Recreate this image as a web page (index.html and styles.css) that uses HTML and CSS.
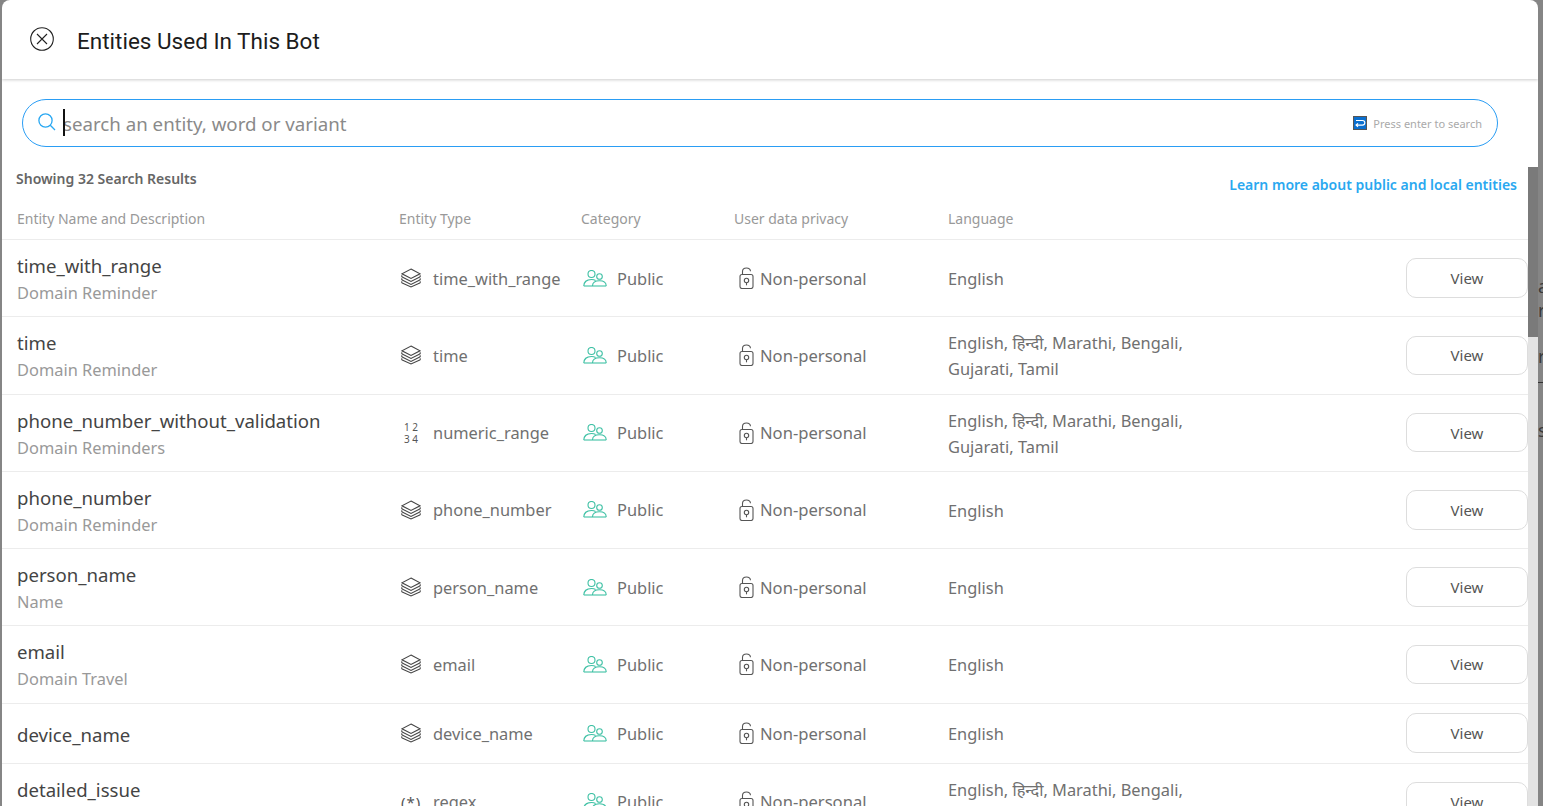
FILE: index.html
```html
<!DOCTYPE html>
<html lang="en">
<head>
  <meta charset="UTF-8">
  <meta name="viewport" content="width=device-width, initial-scale=1.0">
  <title>Entities Used In This Bot</title>
  <link rel="stylesheet" href="styles.css">
</head>
<body>
  <!-- Icons -->
  <svg class="icon-defs" width="0" height="0">
    <symbol id="i-stack" viewBox="0 0 20 20">
      <path d="M10 1 19 5.800 10 10.500 1 5.800Z"/>
      <path d="M1.200 7.500C.6 8 .6 8.700 1.200 9L10 13.500 18.800 9C19.400 8.700 19.400 8 18.800 7.500"/>
      <path d="M1.200 10.500C.6 11 .6 11.700 1.200 12L10 16.500 18.800 12C19.400 11.700 19.400 11 18.800 10.500"/>
      <path d="M1.200 13.500C.6 14 .6 14.700 1.200 15L10 19 18.800 15C19.400 14.700 19.400 14 18.800 13.500"/>
    </symbol>
    <symbol id="i-people" viewBox="0 0 24 17">
      <circle cx="8.500" cy="4" r="3.500"/>
      <circle cx="16.500" cy="6.500" r="2.800"/>
      <path d="M.8 16c0-4 3-6.500 7.700-6.500 1.600 0 3 .3 4.100 1"/>
      <path d="M.8 16H23.200"/>
      <path d="M9.500 16c0-3.500 3-5.200 7-5.200s6.700 1.700 6.700 5.200"/>
    </symbol>
    <symbol id="i-lock" viewBox="0 0 15 22">
      <rect x="1" y="7.500" width="13" height="14" rx="2"/>
      <path d="M3.500 7.500V4.500C3.500 2.300 5.200 1 7.500 1s3.800 1.200 4 3.200"/>
      <circle cx="7.500" cy="13.500" r="2.200"/>
      <path d="M7.500 15.700v2.600"/>
    </symbol>
  </svg>

  <div class="backdrop">
    <span class="bg-frag bg-a">a</span>
    <span class="bg-frag bg-r1">r</span>
    <span class="bg-frag bg-r2">r</span>
    <span class="bg-line"></span>
    <span class="bg-frag bg-s">s</span>
  </div>

  <div class="modal">
    <header class="modal-head">
      <svg class="close-icon" viewBox="0 0 24 24" width="24" height="24">
        <circle cx="12" cy="12" r="11.300"/>
        <path d="M7 7l10 10M17 7 7 17"/>
      </svg>
      <h1>Entities Used In This Bot</h1>
    </header>

    <div class="search-wrap">
      <div class="search-box">
        <svg class="search-icon" viewBox="0 0 18 18" width="18" height="18">
          <circle cx="7.500" cy="7.500" r="6.600"/>
          <path d="M12.300 12.300 17 17"/>
        </svg>
        <div class="input-wrap">
          <input type="text" placeholder="search an entity, word or variant">
          <span class="caret"></span>
        </div>
        <span class="enter-key">
          <svg viewBox="0 0 14 14" width="14" height="14">
            <path d="M3 4.500h6.500a2.300 2.300 0 0 1 0 4.600H3.200M5 7.300 3 9.100l2 1.800"/>
          </svg>
        </span>
        <span class="enter-hint">Press enter to search</span>
      </div>
    </div>

    <div class="summary">
      <span class="count">Showing 32 Search Results</span>
      <a class="learn" href="#">Learn more about public and local entities</a>
    </div>

    <div class="row head-row">
      <div>Entity Name and Description</div>
      <div>Entity Type</div>
      <div>Category</div>
      <div>User data privacy</div>
      <div>Language</div>
    </div>

    <div class="row">
      <div class="name-cell"><div class="ent-name">time_with_range</div><div class="ent-desc">Domain Reminder</div></div>
      <div class="type-cell"><svg class="ico-stack"><use href="#i-stack"/></svg>time_with_range</div>
      <div class="cat-cell"><svg class="ico-people"><use href="#i-people"/></svg>Public</div>
      <div class="priv-cell"><svg class="ico-lock"><use href="#i-lock"/></svg>Non-personal</div>
      <div class="lang-cell">English</div>
      <button>View</button>
    </div>
    <div class="row">
      <div class="name-cell"><div class="ent-name">time</div><div class="ent-desc">Domain Reminder</div></div>
      <div class="type-cell"><svg class="ico-stack"><use href="#i-stack"/></svg>time</div>
      <div class="cat-cell"><svg class="ico-people"><use href="#i-people"/></svg>Public</div>
      <div class="priv-cell"><svg class="ico-lock"><use href="#i-lock"/></svg>Non-personal</div>
      <div class="lang-cell">English, हिन्दी, Marathi, Bengali, Gujarati, Tamil</div>
      <button>View</button>
    </div>
    <div class="row">
      <div class="name-cell"><div class="ent-name">phone_number_without_validation</div><div class="ent-desc">Domain Reminders</div></div>
      <div class="type-cell"><span class="ico-num">1 2<br>3 4</span>numeric_range</div>
      <div class="cat-cell"><svg class="ico-people"><use href="#i-people"/></svg>Public</div>
      <div class="priv-cell"><svg class="ico-lock"><use href="#i-lock"/></svg>Non-personal</div>
      <div class="lang-cell">English, हिन्दी, Marathi, Bengali, Gujarati, Tamil</div>
      <button>View</button>
    </div>
    <div class="row">
      <div class="name-cell"><div class="ent-name">phone_number</div><div class="ent-desc">Domain Reminder</div></div>
      <div class="type-cell"><svg class="ico-stack"><use href="#i-stack"/></svg>phone_number</div>
      <div class="cat-cell"><svg class="ico-people"><use href="#i-people"/></svg>Public</div>
      <div class="priv-cell"><svg class="ico-lock"><use href="#i-lock"/></svg>Non-personal</div>
      <div class="lang-cell">English</div>
      <button>View</button>
    </div>
    <div class="row">
      <div class="name-cell"><div class="ent-name">person_name</div><div class="ent-desc">Name</div></div>
      <div class="type-cell"><svg class="ico-stack"><use href="#i-stack"/></svg>person_name</div>
      <div class="cat-cell"><svg class="ico-people"><use href="#i-people"/></svg>Public</div>
      <div class="priv-cell"><svg class="ico-lock"><use href="#i-lock"/></svg>Non-personal</div>
      <div class="lang-cell">English</div>
      <button>View</button>
    </div>
    <div class="row">
      <div class="name-cell"><div class="ent-name">email</div><div class="ent-desc">Domain Travel</div></div>
      <div class="type-cell"><svg class="ico-stack"><use href="#i-stack"/></svg>email</div>
      <div class="cat-cell"><svg class="ico-people"><use href="#i-people"/></svg>Public</div>
      <div class="priv-cell"><svg class="ico-lock"><use href="#i-lock"/></svg>Non-personal</div>
      <div class="lang-cell">English</div>
      <button>View</button>
    </div>
    <div class="row short-row">
      <div class="name-cell"><div class="ent-name">device_name</div></div>
      <div class="type-cell"><svg class="ico-stack"><use href="#i-stack"/></svg>device_name</div>
      <div class="cat-cell"><svg class="ico-people"><use href="#i-people"/></svg>Public</div>
      <div class="priv-cell"><svg class="ico-lock"><use href="#i-lock"/></svg>Non-personal</div>
      <div class="lang-cell">English</div>
      <button>View</button>
    </div>
    <div class="row">
      <div class="name-cell"><div class="ent-name">detailed_issue</div><div class="ent-desc">Domain Reminder</div></div>
      <div class="type-cell"><span class="ico-regex">(*)</span>regex</div>
      <div class="cat-cell"><svg class="ico-people"><use href="#i-people"/></svg>Public</div>
      <div class="priv-cell"><svg class="ico-lock"><use href="#i-lock"/></svg>Non-personal</div>
      <div class="lang-cell">English, हिन्दी, Marathi, Bengali, Gujarati, Tamil</div>
      <button>View</button>
    </div>

    <div class="scrollbar"><div class="scroll-thumb"></div></div>
  </div>
</body>
</html>
```

FILE: styles.css
```css
html, body {
  height: 100%;
  margin: 0;
  overflow: hidden;
}
body {
  background-color: #858585;
  font-family: "Noto Sans", "Noto Sans Devanagari", "Open Sans", sans-serif;
  color: #666;
}
.icon-defs {
  position: absolute;
}

/* page behind the dialog, only a sliver shows */
.bg-frag {
  position: absolute;
  left: 1538px;
  font-size: 18px;
  color: #3a3a3a;
}
.bg-a { top: 274px; }
.bg-r1 { top: 298px; }
.bg-r2 { top: 344px; }
.bg-s { top: 418px; }
.bg-line {
  position: absolute;
  left: 1538px;
  top: 382px;
  width: 5px;
  height: 1px;
  background-color: #333;
}

.modal {
  position: absolute;
  left: 2px;
  top: 0;
  width: 1536px;
  height: 806px;
  overflow: hidden;
  background-color: #fff;
  border-radius: 8px 8px 0 0;
}
.modal-head {
  display: flex;
  align-items: center;
  height: 79px;
  padding-left: 28px;
  box-shadow: 0 1px 3px rgba(0, 0, 0, 0.2);
}
.close-icon {
  fill: none;
  stroke: #222;
  stroke-width: 1.1;
  margin-top: -2px;
}
.modal-head h1 {
  margin: 2px 0 0 23px;
  font-family: Roboto, sans-serif;
  font-size: 22.5px;
  font-weight: 400;
  color: #1c1c1c;
}

.search-wrap {
  padding: 20px 40px 0 20px;
}
.search-box {
  display: flex;
  align-items: center;
  height: 48px;
  box-sizing: border-box;
  padding: 0 15px;
  border: 1px solid #2a9df4;
  border-radius: 24px;
}
.search-icon {
  fill: none;
  stroke: #2aa8f2;
  stroke-width: 1.3;
  flex: none;
  margin-top: -2px;
}
.input-wrap {
  position: relative;
  flex: 1;
  margin-left: 7px;
}
.input-wrap input {
  width: 100%;
  border: none;
  outline: none;
  padding: 0;
  background: transparent;
  font-family: inherit;
  font-size: 18.7px;
}
.input-wrap input::placeholder {
  color: #8a8a8a;
}
.caret {
  position: absolute;
  left: 0;
  top: -2px;
  width: 2px;
  height: 27px;
  background-color: #111;
}
.enter-key {
  display: flex;
  width: 14px;
  height: 14px;
  box-sizing: border-box;
  background-color: #0a6fcf;
  outline: 1px solid #555;
  outline-offset: -1px;
  margin-right: 6px;
}
.enter-key svg {
  fill: none;
  stroke: #fff;
  stroke-width: 1.1;
}
.enter-hint {
  font-size: 11px;
  color: #aaa;
}

.summary {
  display: flex;
  justify-content: space-between;
  height: 39px;
  padding: 22px 21px 0 14px;
}
.count {
  font-size: 14px;
  font-weight: 600;
  color: #666;
}
.learn {
  font-size: 14px;
  font-weight: 600;
  color: #29a8f0;
  text-decoration: none;
  margin-top: 6px;
}

.row {
  display: grid;
  grid-template-columns: 382px 182px 153px 214px 458px 122px;
  align-items: center;
  box-sizing: border-box;
  height: 77.25px;
  padding-left: 15px;
  border-bottom: 1px solid #ececec;
}
.head-row {
  height: 32px;
  padding-top: 1px;
  align-items: start;
  font-size: 14px;
  color: #999;
}
.short-row {
  height: 60px;
}
.name-cell {
  margin-top: 2px;
}
.ent-name {
  font-size: 18.6px;
  line-height: 27px;
  color: #444;
}
.ent-desc {
  font-size: 16.4px;
  line-height: 27px;
  color: #999;
}
.type-cell, .cat-cell, .priv-cell, .lang-cell {
  font-size: 16.4px;
  color: #707070;
}
.lang-cell {
  margin-top: 2px;
  max-width: 250px;
  line-height: 26px;
}
.type-cell, .cat-cell, .priv-cell {
  display: flex;
  align-items: center;
}
.priv-cell {
  font-size: 16.6px;
}
.ico-stack {
  width: 20px;
  height: 20px;
  margin: 0 12px 0 2px;
  fill: none;
  stroke: #444;
  stroke-width: 1.1;
  flex: none;
}
.ico-num {
  width: 20px;
  margin: 0 12px 0 2px;
  font-size: 10px;
  line-height: 12px;
  text-align: center;
  color: #555;
  flex: none;
}
.ico-regex {
  width: 20px;
  margin: 0 12px 0 2px;
  font-size: 15px;
  letter-spacing: 1px;
  text-align: center;
  color: #555;
  flex: none;
}
.ico-people {
  width: 24px;
  height: 17px;
  margin: 0 10px 0 2px;
  fill: none;
  stroke: #3fc1a5;
  stroke-width: 1.1;
  flex: none;
}
.ico-lock {
  width: 15px;
  height: 22px;
  margin: 0 6px 0 5px;
  fill: none;
  stroke: #555;
  stroke-width: 1.1;
  flex: none;
}
button {
  width: 122px;
  height: 39.5px;
  padding: 0;
  background-color: #fff;
  border: 1px solid #ddd;
  border-radius: 10px;
  font-family: inherit;
  font-size: 15px;
  color: #555;
  cursor: pointer;
}

.scrollbar {
  position: absolute;
  left: 1526px;
  top: 167px;
  bottom: 0;
  width: 10px;
  background-color: #e3e3e3;
}
.scroll-thumb {
  height: 170px;
  background-color: #7a7a7a;
}
```
